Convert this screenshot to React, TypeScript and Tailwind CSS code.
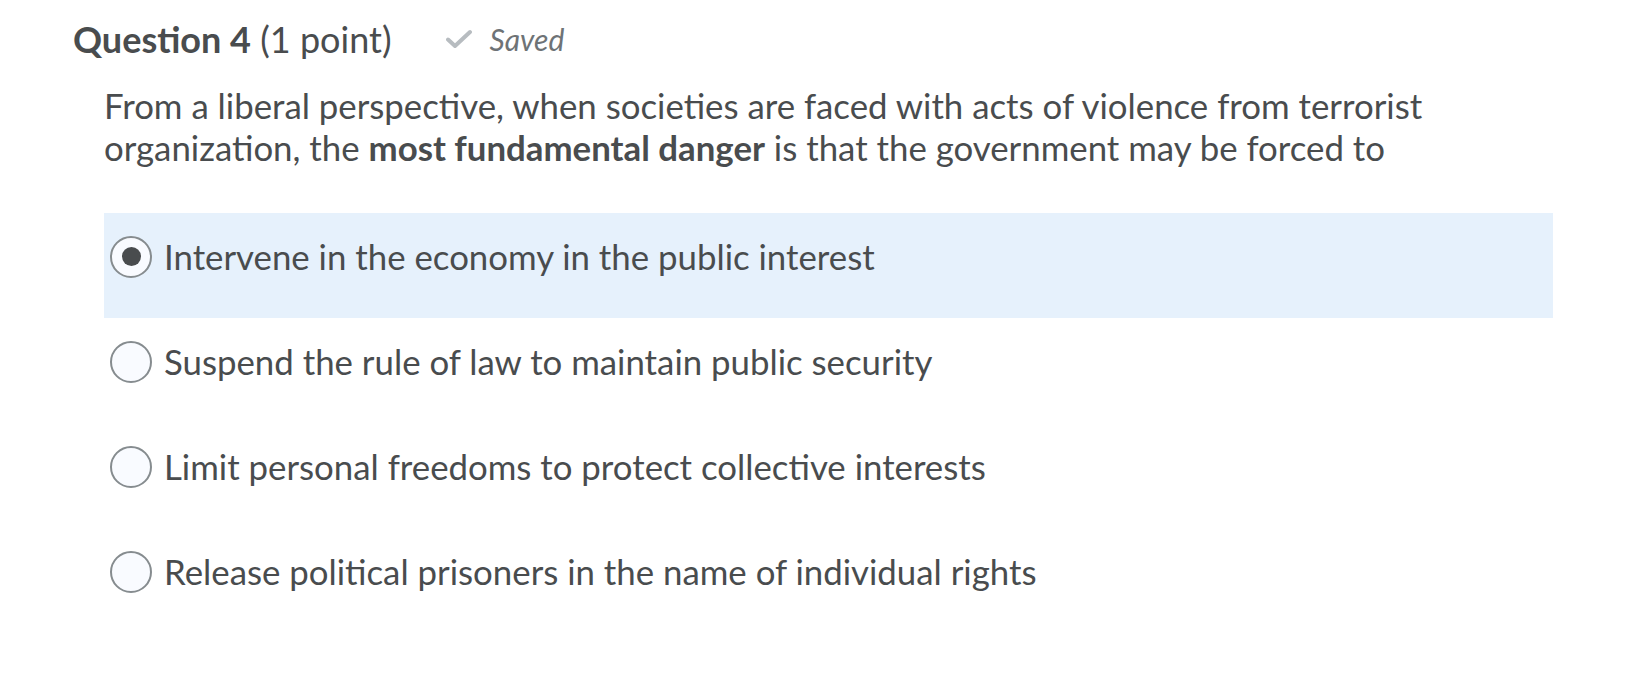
const options = [
  "Intervene in the economy in the public interest",
  "Suspend the rule of law to maintain public security",
  "Limit personal freedoms to protect collective interests",
  "Release political prisoners in the name of individual rights",
];

function Radio({ checked }: { checked: boolean }) {
  return (
    <span className="flex h-[42px] w-[42px] shrink-0 items-center justify-center rounded-full border-2 border-[#868c8f] bg-[#f9fbff]">
      {checked && <span className="h-[19px] w-[19px] rounded-full bg-[#494c4e]"></span>}
    </span>
  );
}

export default function App() {
  const selected = 0;
  return (
    <div className="min-h-[684px] w-[1640px] bg-white font-['Lato',sans-serif] text-[#494c4e]">
      <div className="flex items-center pl-[73px] pt-[15px]">
        <h2 className="text-[36px] leading-[48px]">
          <span className="font-bold">Question 4</span> (1 point)
        </h2>
        <div className="ml-[54px] flex items-center gap-[18px] text-[#6e7376]">
          <svg width="26" height="20" viewBox="0 0 26 20" fill="none">
            <path
              d="M2 10.5 L9 17 L24 3"
              stroke="#b7bcc0"
              strokeWidth="4"
              strokeLinecap="round"
              strokeLinejoin="round"
            />
          </svg>
          <span className="text-[30px] italic">Saved</span>
        </div>
      </div>

      <div className="pl-[104px] pr-[87px]">
        <p className="mt-[22px] text-[34.8px] leading-[42px]">
          From a liberal perspective, when societies are faced with acts of violence from terrorist
          <br />
          organization, the <strong className="font-bold">most fundamental danger</strong> is that
          the government may be forced to
        </p>

        <div className="mt-[44px]">
          {options.map((opt, i) => (
            <label
              key={opt}
              className={
                "flex h-[105px] items-center gap-[12px] pb-[18px] pl-[6px] " +
                (i === selected ? "bg-[#e6f1fc]" : "")
              }
            >
              <Radio checked={i === selected} />
              <span className="text-[34.8px] leading-[42px]">{opt}</span>
            </label>
          ))}
        </div>
      </div>
    </div>
  );
}
